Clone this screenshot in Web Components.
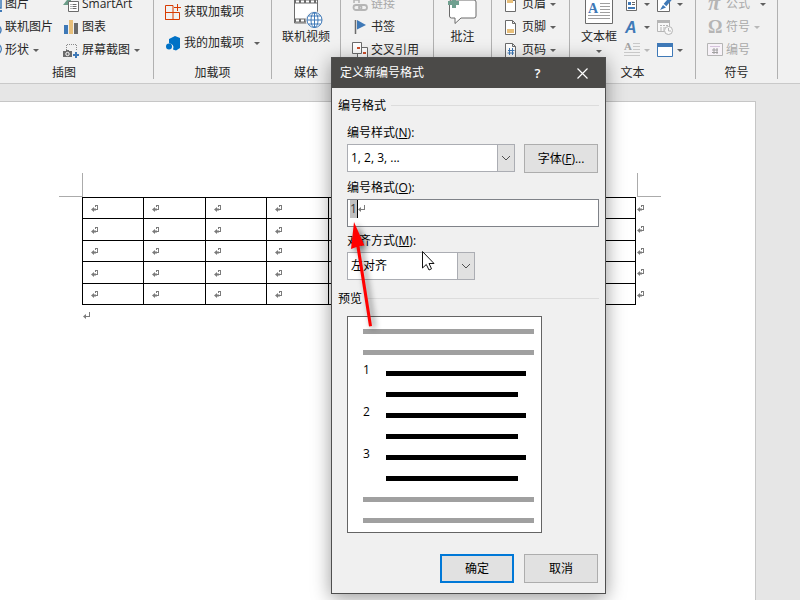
<!DOCTYPE html>
<html lang="zh-CN">
<head>
<meta charset="utf-8">
<title>定义新编号格式</title>
<style>
html, body { margin: 0; min-height: 100%; }
body {
  display: flex; flex-direction: column; min-height: 100vh; position: relative;
  overflow: hidden; background: #e6e6e6; color: #262626;
  font: 12px/18px "Open Sans", "Noto Sans CJK SC", sans-serif;
}
number-dialog { position: absolute; left: 331px; top: 57px; }
pointer-arrow { position: absolute; left: 340px; top: 215px; }
mouse-cursor { position: absolute; left: 421px; top: 250px; }
</style>
</head>
<body>
<ribbon-bar>
  <ribbon-group label="插图" size="first">
    <ribbon-column>
      <ribbon-item icon="picture">图片</ribbon-item>
      <ribbon-item icon="online">联机图片</ribbon-item>
      <ribbon-item icon="shapes" caret>形状</ribbon-item>
    </ribbon-column>
    <ribbon-column>
      <ribbon-item icon="smartart">SmartArt</ribbon-item>
      <ribbon-item icon="chart">图表</ribbon-item>
      <ribbon-item icon="screenshot" caret>屏幕截图</ribbon-item>
    </ribbon-column>
  </ribbon-group>
  <ribbon-group label="加载项" size="addins">
    <ribbon-column spread>
      <ribbon-item icon="store">获取加载项</ribbon-item>
      <ribbon-item icon="myaddins" caret split>我的加载项</ribbon-item>
    </ribbon-column>
  </ribbon-group>
  <ribbon-group label="媒体" size="media">
    <ribbon-item icon="video" large>联机视频</ribbon-item>
  </ribbon-group>
  <ribbon-group size="links">
    <ribbon-column>
      <ribbon-item icon="link" disabled>链接</ribbon-item>
      <ribbon-item icon="bookmark">书签</ribbon-item>
      <ribbon-item icon="crossref">交叉引用</ribbon-item>
    </ribbon-column>
  </ribbon-group>
  <ribbon-group size="comments">
    <ribbon-item icon="comment" large>批注</ribbon-item>
  </ribbon-group>
  <ribbon-group size="header">
    <ribbon-column>
      <ribbon-item icon="header" caret>页眉</ribbon-item>
      <ribbon-item icon="footer" caret>页脚</ribbon-item>
      <ribbon-item icon="pagenum" caret>页码</ribbon-item>
    </ribbon-column>
  </ribbon-group>
  <ribbon-group label="文本" size="text">
    <ribbon-item icon="textbox" large caret>文本框</ribbon-item>
    <ribbon-column>
      <ribbon-item icon="parts" caret bare></ribbon-item>
      <ribbon-item icon="wordart" caret bare></ribbon-item>
      <ribbon-item icon="dropcap" caret bare disabled></ribbon-item>
    </ribbon-column>
    <ribbon-column>
      <ribbon-item icon="signature" caret bare></ribbon-item>
      <ribbon-item icon="datetime" bare></ribbon-item>
      <ribbon-item icon="object" caret bare></ribbon-item>
    </ribbon-column>
  </ribbon-group>
  <ribbon-group label="符号" size="symbols">
    <ribbon-column>
      <ribbon-item icon="pi" caret split disabled darkcaret>公式</ribbon-item>
      <ribbon-item icon="omega" caret disabled>符号</ribbon-item>
      <ribbon-item icon="number" disabled>编号</ribbon-item>
    </ribbon-column>
  </ribbon-group>
</ribbon-bar>
<doc-page rows="5" columns="9"></doc-page>
<number-dialog heading="定义新编号格式"></number-dialog>
<pointer-arrow></pointer-arrow>
<mouse-cursor></mouse-cursor>

<script>
const G = '#6b6b6b', B = '#3f79b7', L = '#b5b5b5';
const svg = (w, h, body) => `<svg width="${w}" height="${h}" viewBox="0 0 ${w} ${h}" fill="none" aria-hidden="true">${body}</svg>`;
const sheet = '<path d="M2.5 1.5h7l3 3v11h-10zM9.5 1.5v3h3" fill="#fff" stroke="#6b6b6b"/>';
const ICONS = {
  picture: svg(16, 16, `<path d="M1.5 3h13.500v9H1.500z" fill="#fff" stroke="${B}" stroke-width="1.500"/><path d="M8 15h8" stroke="${B}" stroke-width="2"/>`),
  online: svg(16, 16, `<rect x=".5" y="2.5" width="12" height="10" fill="#fff" stroke="${G}"/><circle cx="10.500" cy="11" r="4.500" fill="#fff" stroke="${B}" stroke-width="1.500"/>`),
  shapes: svg(16, 16, `<circle cx="10" cy="7" r="5.300" fill="#fff" stroke="${B}" stroke-width="1.300"/><rect x="1" y="8" width="7" height="7" fill="${B}"/>`),
  smartart: svg(16, 16, `<path d="M0 9l4-5h4v5z" fill="#6a9c87"/><path d="M5.500 5.500h10v10h-10z" fill="#fff" stroke="${G}"/><path d="M7.500 8.500h1m1 0h4m-6 2h1m1 0h4m-6 2h1m1 0h4" stroke="${G}"/>`),
  chart: svg(16, 16, `<path d="M1 6h4v9H1z" fill="${B}"/><path d="M6 1h4v14H6z" fill="#e8bf7a"/><path d="M11 4h4v11h-4z" fill="${G}"/>`),
  screenshot: svg(16, 16, `<path d="M3.500 8V2.500h10V9" stroke="#8a8a8a" stroke-dasharray="1 1"/><path d="M0 9h3V8h3v1h3v6H0z" fill="${G}"/><circle cx="4.500" cy="12" r="1.700" fill="${G}" stroke="#fff"/><path d="M13 10v6m-3-3h6" stroke="${B}" stroke-width="2"/>`),
  store: svg(16, 16, `<path d="M.5 1.500H8v14H.5zM.5 8.500h14v7H.5" stroke="#d83b01"/><path d="M12.500 0v7M9 3.500h7" stroke="#d83b01"/>`),
  myaddins: svg(16, 16, `<path d="M4 4l6-3 5 2v10l-4 2.500-3-1a4 4 0 0 0-4-6z" fill="#0072c6"/><circle cx="4" cy="11.500" r="3" fill="#0072c6"/>`),
  video: svg(32, 32, `<path d="M4.500-1h23v28h-23z" fill="#fff" stroke="${G}"/><path d="M5 5.500h22M5 24.500h22" stroke="${G}" stroke-width="4"/><path d="M6 5.500h21M6 24.500h21" stroke="#fff" stroke-width="2" stroke-dasharray="3 2"/><circle cx="24.500" cy="24" r="9" fill="#f1f1f1"/><circle cx="24.500" cy="24" r="7.500" fill="#fff" stroke="${B}"/><path d="M17 24h15M24.500 16.500v15M18.500 20h12M18.500 28h12" stroke="${B}"/><ellipse cx="24.500" cy="24" rx="3.500" ry="7.500" stroke="${B}"/>`),
  link: svg(16, 16, `<path d="M2 0v7m5-7v7M2 4h5" stroke="${L}" stroke-width="1.500"/><rect x="1.500" y="9" width="8" height="5" rx="2.500" stroke="${L}" stroke-width="1.800"/><rect x="7" y="9" width="8" height="5" rx="2.500" stroke="${L}" stroke-width="1.800"/>`),
  bookmark: svg(16, 16, `<path d="M3.500 1v14" stroke="${G}" stroke-width="1.500"/><path d="M5 1l9 5-9 4.500z" fill="${B}"/>`),
  crossref: svg(16, 16, `<path d="M.5.5h9v11h-9z" fill="#fff" stroke="${G}"/><path d="M10 5h5.500v11H5.500v-4h5z" fill="#fff"/><path d="M10 5.500h5.500V16M5.500 12v4" stroke="${G}"/><path d="M5 5h3v2H5zM11 10h3v2h-3z" fill="#d04f2c"/>`),
  comment: svg(32, 32, `<path d="M4 4h23a2 2 0 0 1 2 2v14a2 2 0 0 1-2 2H14l-6 5.500V22H4.500a2 2 0 0 1-2-2V5z" fill="#fff" stroke="#6b6b6b"/><path d="M5 3h4v9H5zM1 5h11v4H1z" fill="#70a090"/>`),
  header: svg(16, 16, sheet + '<path d="M4 4h6v3H4z" fill="#e8bf7a"/>'),
  footer: svg(16, 16, sheet + '<path d="M4 10h7v4H4z" fill="#e8bf7a"/>'),
  pagenum: svg(16, 16, sheet + `<path d="M6.500 6v7m3-7v7M5 8.500h6.500M4.500 11H11" stroke="${B}"/>`),
  textbox: svg(32, 32, `<path d="M2.500 0h27v27.500h-27z" fill="#fff" stroke="${G}"/><text x="5" y="17" font-family="Liberation Serif, serif" font-weight="bold" font-size="14" fill="${B}">A</text><path d="M17 7.500h10m-10 3h10m-10 3h10m-10 3h10m-22 3h22m-22 3h22" stroke="#a0a0a0"/>`),
  parts: svg(16, 16, `<path d="M2.500 1v13.500h10V1" fill="#fff" stroke="${G}"/><path d="M4 6h3v3H4zM4 11h7v2H4z" fill="${B}"/><path d="M8 6.500h3m-3 2h3" stroke="${G}"/>`),
  wordart: svg(16, 16, `<text x="1" y="14" font-family="Liberation Sans, sans-serif" font-style="italic" font-weight="bold" font-size="16" fill="${B}">A</text>`),
  dropcap: svg(16, 16, `<text x="0" y="8" font-family="Liberation Serif, serif" font-weight="bold" font-size="11" fill="#a0a0a0">A</text><path d="M9 1.500h7m-7 3h7m-7 3h7M0 10.500h16M0 13.500h16" stroke="#c8c8c8"/>`),
  signature: svg(16, 16, `<path d="M.5 0v15.500h12V2" fill="#fff" stroke="${G}"/><path d="M15 1L8 9" stroke="${B}" stroke-width="3.500"/><path d="M3 14l3-5 3 2.500z" fill="${B}"/>`),
  datetime: svg(16, 16, `<path d="M.5 1.500h12v11H.5z" fill="#f8f8f8" stroke="${L}"/><path d="M0 2.500h13" stroke="${L}" stroke-width="3"/><path d="M3 6.500h8m-8 2.500h6m-6 2h4" stroke="${L}" stroke-dasharray="2 1"/><circle cx="11.500" cy="11.500" r="4" fill="#f8f8f8" stroke="${L}"/><path d="M11.500 9v3h2.500" stroke="${L}"/>`),
  object: svg(16, 16, `<path d="M.5 1.500h15v13H.5z" fill="#fff" stroke="${B}"/><path d="M0 3h16" stroke="${B}" stroke-width="4"/>`),
  pi: svg(16, 16, `<text x="1" y="14" font-family="Liberation Serif, serif" font-style="italic" font-weight="bold" font-size="22" fill="${L}">π</text>`),
  omega: svg(16, 16, `<text x="1" y="14" font-family="Liberation Serif, serif" font-weight="bold" font-size="18" fill="${L}">Ω</text>`),
  number: svg(16, 16, `<path d="M.5 1.500h15v12H.5z" fill="#f7f2f8" stroke="${L}"/><path d="M3 4.500h10" stroke="#d5c3dc"/><path d="M7 6v6m3-6v6M5 8h6m-6 2.500h6" stroke="#a0a0a0"/>`)
};
const CELL_MARK = svg(8, 8, '<path d="M4.500 2V.5h2v4H4" stroke="#7b7b7b" shape-rendering="crispEdges"/><path d="M0 4.500L3 2v1.500h2v2H3V7z" fill="#7b7b7b"/>');
const PARA_MARK = svg(8, 8, '<path d="M6.500 0v4.500H3" stroke="#7b7b7b" shape-rendering="crispEdges"/><path d="M0 4.500L3 2v5z" fill="#7b7b7b"/>');

function define(name, render) {
  customElements.define(name, class extends HTMLElement {
    connectedCallback() {
      if (this.shadowRoot) return;
      const t = document.createElement('template');
      t.innerHTML = render(this);
      this.attachShadow({ mode: 'open' }).append(t.content.cloneNode(true));
    }
  });
}

define('ribbon-bar', () => `<style>
  :host { display: flex; height: 83px; flex: none; margin-left: -25px; overflow: hidden; background: #f1f1f1; border-bottom: 1px solid #c9c9c9; }
</style><slot></slot>`);

const GROUPS = { first: 178, addins: 117, media: 68, links: 92, comments: 57, header: 77, text: 125, symbols: 81 };
define('ribbon-group', el => `<style>
  :host { display: flex; flex-direction: column; box-sizing: content-box; min-width: 0; flex: 0 0 ${GROUPS[el.getAttribute('size')]}px; height: 79px; border-right: 1px solid #b1b1b1; }
  .items { display: flex; align-items: flex-end; height: 61px; padding: 0 11px; }
  :host([size=first]) .items { justify-content: flex-end; gap: 10px; padding: 0 13px; }
  :host([size=text]) .items { gap: 7px; }
  :host([size=media]) .items, :host([size=comments]) .items { justify-content: center; padding: 0; }
  .label { height: 15px; padding-top: 3px; text-align: center; }
</style><div class="items"><slot></slot></div><div class="label">${el.getAttribute('label') || ''}</div>`);

define('ribbon-column', () => `<style>
  :host { display: flex; flex-direction: column; gap: 1px; }
  :host([spread]) { gap: 9px; padding-bottom: 7px; }
</style><slot></slot>`);

define('ribbon-item', el => `<style>
  :host { display: block; }
  button { all: unset; display: flex; align-items: center; gap: 3px; height: 22px; white-space: nowrap; color: #262626; }
  svg { flex: none; display: block; overflow: visible; }
  i { width: 0; height: 0; margin-left: 1px; border: solid transparent; border-width: 3px 3px 0; border-top-color: #5f5f5f; }
  :host([split]) i { margin-left: 7px; }
  :host([disabled]) button { color: #a9a9a9; }
  :host([disabled]:not([darkcaret])) i { border-top-color: #b8b8b8; }
  :host([large]) button { flex-direction: column; gap: 0; height: 65px; }
  :host([large]) i { margin: 4px 0 0; }
</style><button type="button" ${el.hasAttribute('disabled') ? 'disabled' : ''} aria-label="${el.textContent.trim() || el.getAttribute('icon')}">${ICONS[el.getAttribute('icon')]}${el.hasAttribute('bare') ? '' : '<span><slot></slot></span>'}${el.hasAttribute('caret') ? '<i></i>' : ''}</button>`);

define('doc-page', el => {
  const row = `<tr>${`<td>${CELL_MARK}</td>`.repeat(+el.getAttribute('columns'))}<td class="end">${CELL_MARK}</td></tr>`;
  return `<style>
  :host { display: block; flex: 1; margin: 17px 44px 0 0; background: #fff; border: solid #c6c6c6; border-width: 1px 1px 0 0; }
  .corners { display: flex; justify-content: space-between; padding: 71px 94px 0 59px; }
  .corners span { width: 23px; height: 23px; border: 0 solid #ababab; border-width: 0 1px 1px 0; }
  .corners span + span { border-width: 0 0 1px 1px; }
  .body { padding: 0 106px 0 82px; }
  table { width: 100%; table-layout: fixed; border-spacing: 0; }
  td { height: 18px; padding: 2px 0 0 8px; border: solid #000; border-width: 1px 0 0 1px; line-height: 0; }
  tr:nth-child(even) td { height: 19px; }
  tr:last-child td { border-bottom-width: 1px; }
  td.end { padding-left: 1px; border-width: 0 0 0 1px !important; }
  col.tail { width: 14px; }
  p { margin: 7px 0 0; padding-left: 1px; line-height: 0; }
</style>
<div class="corners"><span></span><span></span></div>
<div class="body"><table><colgroup>${'<col>'.repeat(+el.getAttribute('columns'))}<col class="tail"></colgroup><tbody>${row.repeat(+el.getAttribute('rows'))}</tbody></table><p>${PARA_MARK}</p></div>`;
});

define('dialog-section', () => `<style>
  :host { display: flex; align-items: center; gap: 5px; height: 18px; }
  hr { flex: 1; margin: 0 0 2px; border: 0; border-top: 1px solid #dcdcdc; }
</style><slot></slot><hr>`);

define('push-button', () => `<style>
  :host { display: block; flex: 0 0 74px; }
  button { width: 100%; height: 29px; padding: 0; border: 1px solid #adadad; background: #e1e1e1; color: #000; font: inherit; }
  :host([primary]) button { border: 2px solid #0078d7; }
</style><button type="button"><slot></slot></button>`);

define('combo-box', el => `<style>
  :host { display: block; }
  label { display: block; height: 18px; margin-bottom: 2px; }
  .box { display: grid; grid-template-columns: 1fr 18px; height: 28px; }
  select { grid-area: 1 / 1 / 2 / 3; appearance: none; border: 1px solid #abadb3; border-radius: 0; background: #fff; padding: 0 20px 0 3px; margin: 0; font: inherit; color: #000; }
  .drop { grid-area: 1 / 2; display: grid; place-items: center; border: 1px solid #abadb3; background: #e1e1e1; pointer-events: none; }
</style><label for="s"><slot></slot></label>
<div class="box"><select id="s"><option>${el.getAttribute('value')}</option></select><span class="drop">${svg(10, 6, '<path d="M1 1l4 4 4-4" stroke="#505050"/>')}</span></div>`);

define('format-field', () => `<style>
  :host { display: block; }
  label { display: block; height: 18px; margin-bottom: 2px; }
  .box { display: flex; height: 26px; padding-left: 2px; border: 1px solid #7f8288; background: #fff; }
  input { width: 7px; height: 18px; padding: 0; border: 0; background: #c0c0c0; color: #333; font: inherit; outline: 0; }
  .caret { width: 1px; height: 18px; background: #000; }
  svg { margin-top: 5px; }
</style><label for="f"><slot></slot></label>
<div class="box"><input id="f" value="1"><span class="caret"></span>${PARA_MARK}</div>`);

define('list-preview', () => `<style>
  :host { display: grid; grid-template-columns: 23px 1fr; grid-auto-rows: 21px; width: 171px; padding: 12px 7px 0 15px; border: 1px solid #646464; background: #fff; height: 203px; }
  .bar { height: 5px; background: #000; margin-right: 8px; grid-column: 2; }
  .bar.short { margin-right: 16px; }
  .bar.side { grid-column: 1 / 3; background: #a0a0a0; margin-right: 0; }
  .n { grid-column: 1; height: 14px; line-height: 14px; margin-top: -8px; color: #000; }
</style><div class="bar side"></div><div class="bar side"></div>
${[1, 2, 3].map(n => `<span class="n">${n}</span><div class="bar"></div><div class="bar short"></div>`).join('')}
<div class="bar side"></div><div class="bar side"></div>`);

define('number-dialog', el => `<style>
  :host { display: block; box-sizing: border-box; width: 275px; border: 1px solid #4f4f4f; background: #f0f0f0; color: #000; box-shadow: 0 4px 18px rgba(0,0,0,.4); }
  header { display: flex; align-items: center; height: 30px; padding-left: 8px; background: #4b4a48; color: #fff; }
  h1 { flex: 1; margin: 0; font: inherit; }
  header button { all: unset; width: 45px; height: 30px; display: grid; place-items: center; font-size: 13px; font-weight: 600; }
  main { padding: 9px 6px 10px; }
  .fields { padding: 0 0 0 9px; }
  .row { display: flex; align-items: flex-end; gap: 9px; margin: 9px 0 7px; }
  .row combo-box { flex: 1; }
  .row push-button { margin: 0 1px -1px 0; }
  .align { width: 128px; margin: 5px 0 10px; }
  list-preview { margin-top: 8px; }
  footer { display: flex; justify-content: flex-end; gap: 10px; margin: 21px 1px 0 0; }
</style>
<header><h1>${el.getAttribute('heading')}</h1><button type="button" aria-label="帮助">?</button><button type="button" aria-label="关闭">${svg(11, 11, '<path d="M.5.5l10 10M10.500.5l-10 10" stroke="#fff" stroke-width="1.200"/>')}</button></header>
<main>
  <dialog-section>编号格式</dialog-section>
  <div class="fields">
    <div class="row"><combo-box value="1, 2, 3, ...">编号样式(<u>N</u>):</combo-box><push-button>字体(<u>F</u>)...</push-button></div>
    <format-field>编号格式(<u>O</u>):</format-field>
    <combo-box class="align" value="左对齐">对齐方式(<u>M</u>):</combo-box>
  </div>
  <dialog-section>预览</dialog-section>
  <div class="fields"><list-preview></list-preview></div>
  <footer><push-button primary>确定</push-button><push-button>取消</push-button></footer>
</main>`);

define('pointer-arrow', () => `<style>
  :host { display: block; pointer-events: none; }
  svg { display: block; overflow: visible; filter: drop-shadow(3px 2px 3px rgba(0,0,0,.55)); }
</style>${svg(40, 116, '<path d="M14 7l10.500 23.500-5 .5L32 111l-3 .5L16.500 32 11 34z" fill="#f00"/>')}`);

define('mouse-cursor', () => `<style>
  :host { display: block; pointer-events: none; }
  svg { display: block; }
</style>${svg(15, 22, '<path d="M1.500 1.500v16.500l3.800-3.500 2.700 5.500 2.500-1.200-2.500-5.300h5z" fill="#fff" stroke="#111"/>')}`);
</script>
</body>
</html>
